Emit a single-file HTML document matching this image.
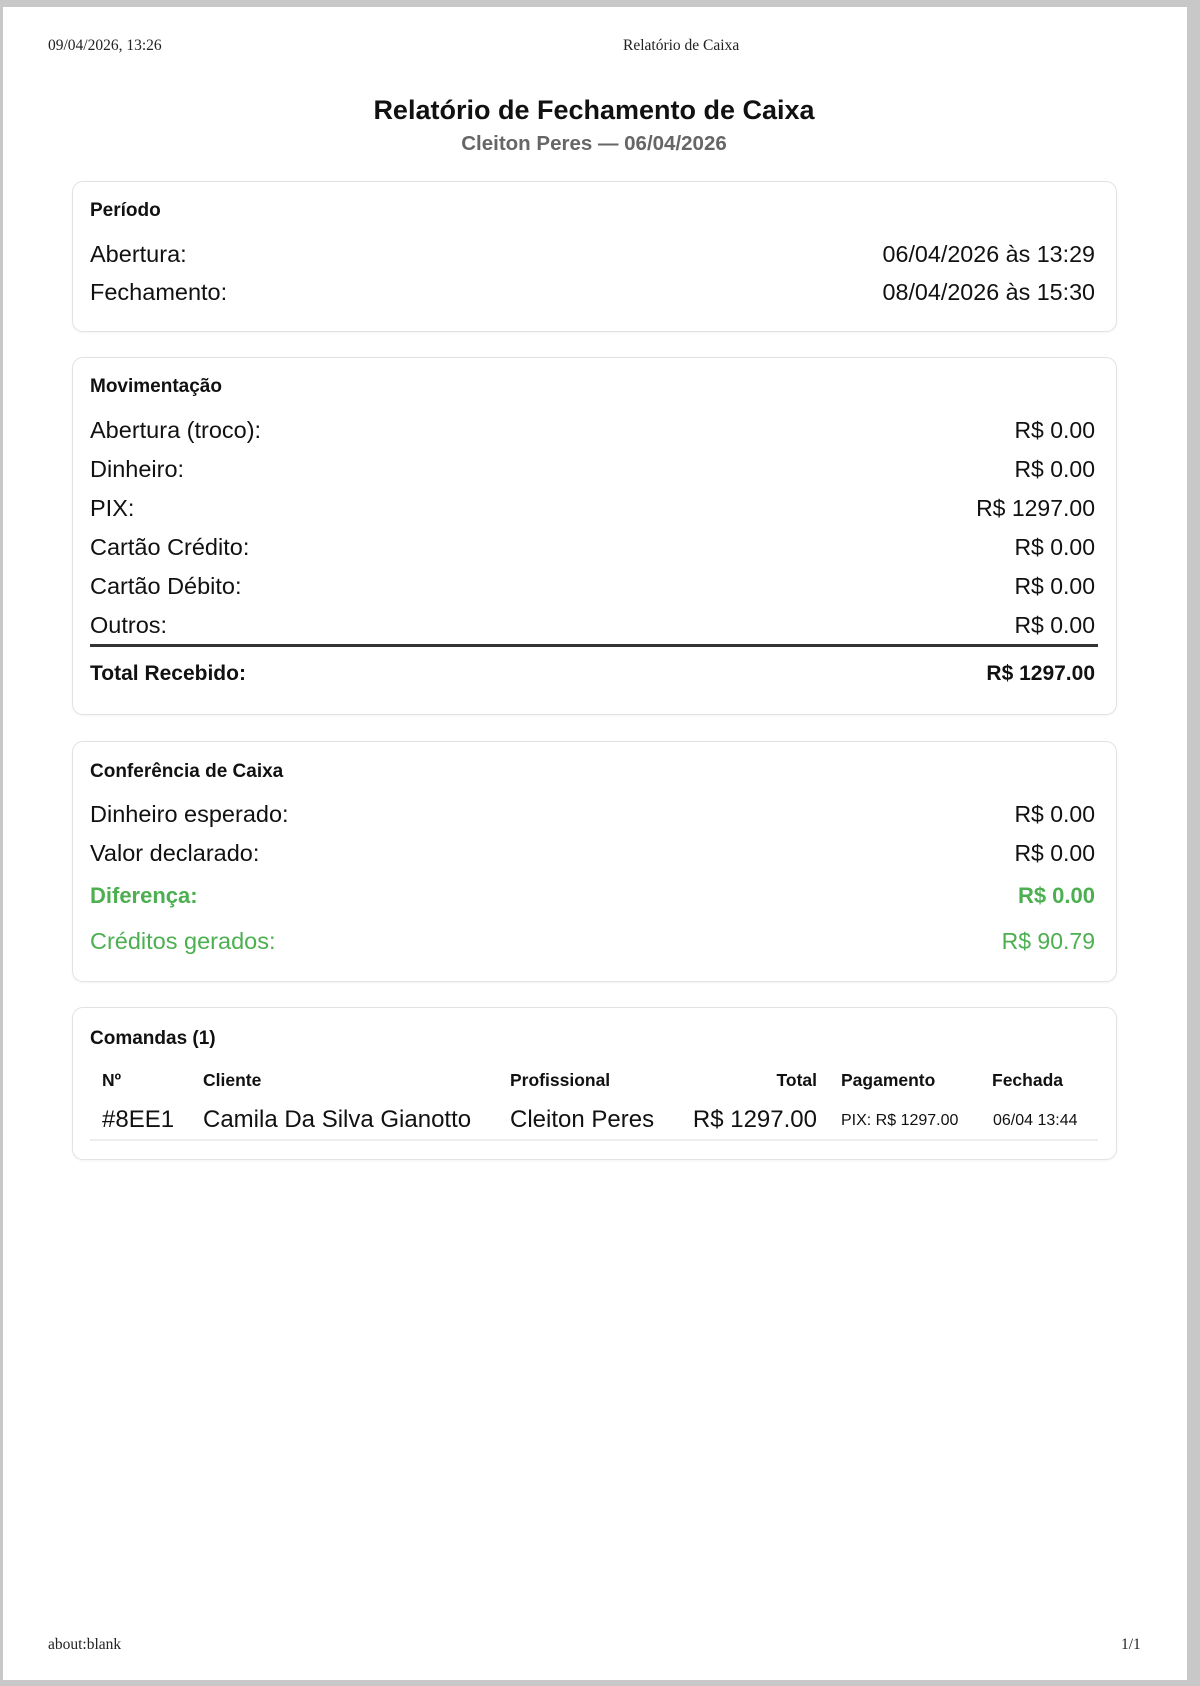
<!DOCTYPE html>
<html><head><meta charset="utf-8"><style>
*{margin:0;padding:0;box-sizing:border-box}
html,body{width:1200px;height:1686px;overflow:hidden}
body{background:#c8c8c8;position:relative;font-family:"Liberation Sans",Arial,sans-serif;color:#111}
.page{position:absolute;left:3px;top:7px;width:1184px;height:1673px;background:#fff}
.t{position:absolute;white-space:nowrap;line-height:28px}
.ser{font-family:"Liberation Serif",serif;font-size:15.5px;color:#222}
.card{position:absolute;left:72px;width:1045px;border:1.5px solid #e2e2e2;border-radius:11px;box-shadow:0 1px 2px rgba(0,0,0,.05)}
.h{font-weight:bold;font-size:19px;left:90px}
.l{left:90px;font-size:23.5px}
.r{right:105px;font-size:23px;text-align:right}
.g{color:#4caf50}
.s{font-size:16px}
.hb{font-weight:bold;font-size:17.5px}
</style></head><body>
<div class="page"></div>
<div class="t ser" style="left:48px;top:32px">09/04/2026, 13:26</div>
<div class="t ser" style="left:623px;top:32px">Relatório de Caixa</div>
<div class="t" style="left:0;width:1188px;text-align:center;top:96px;font-size:27px;font-weight:bold">Relatório de Fechamento de Caixa</div>
<div class="t" style="left:0;width:1188px;text-align:center;top:130px;font-size:20.5px;font-weight:bold;color:#666">Cleiton Peres — 06/04/2026</div>

<div class="card" style="top:181px;height:151px"></div>
<div class="t h" style="top:197px">Período</div>
<div class="t l" style="top:240px">Abertura:</div><div class="t r" style="top:240px;font-size:23.3px">06/04/2026 às 13:29</div>
<div class="t l" style="top:278px">Fechamento:</div><div class="t r" style="top:278px;font-size:23.3px">08/04/2026 às 15:30</div>

<div class="card" style="top:357px;height:358px"></div>
<div class="t h" style="top:373px">Movimentação</div>
<div class="t l" style="top:416px">Abertura (troco):</div><div class="t r" style="top:416px">R$ 0.00</div>
<div class="t l" style="top:455px">Dinheiro:</div><div class="t r" style="top:455px">R$ 0.00</div>
<div class="t l" style="top:494px">PIX:</div><div class="t r" style="top:494px">R$ 1297.00</div>
<div class="t l" style="top:533px">Cartão Crédito:</div><div class="t r" style="top:533px">R$ 0.00</div>
<div class="t l" style="top:572px">Cartão Débito:</div><div class="t r" style="top:572px">R$ 0.00</div>
<div class="t l" style="top:611px">Outros:</div><div class="t r" style="top:611px">R$ 0.00</div>
<div style="position:absolute;left:90px;top:644px;width:1008px;height:3px;background:#333"></div>
<div class="t l" style="top:660px;font-weight:bold;font-size:21px">Total Recebido:</div><div class="t r" style="top:660px;font-weight:bold;font-size:21px">R$ 1297.00</div>

<div class="card" style="top:741px;height:241px"></div>
<div class="t h" style="top:758px">Conferência de Caixa</div>
<div class="t l" style="top:800px">Dinheiro esperado:</div><div class="t r" style="top:800px">R$ 0.00</div>
<div class="t l" style="top:839px">Valor declarado:</div><div class="t r" style="top:839px">R$ 0.00</div>
<div class="t l g" style="top:882px;font-weight:bold;font-size:22px">Diferença:</div><div class="t r g" style="top:882px;font-weight:bold;font-size:22px">R$ 0.00</div>
<div class="t l g" style="top:927px">Créditos gerados:</div><div class="t r g" style="top:927px">R$ 90.79</div>

<div class="card" style="top:1007px;height:153px"></div>
<div class="t h" style="top:1025px">Comandas (1)</div>
<div class="t hb" style="left:102px;top:1066px">Nº</div>
<div class="t hb" style="left:203px;top:1066px">Cliente</div>
<div class="t hb" style="left:510px;top:1066px">Profissional</div>
<div class="t hb" style="right:383px;top:1066px">Total</div>
<div class="t hb" style="left:841px;top:1066px">Pagamento</div>
<div class="t hb" style="left:992px;top:1066px">Fechada</div>
<div class="t" style="left:102px;top:1106px;font-size:24px">#8EE1</div>
<div class="t" style="left:203px;top:1106px;font-size:24px">Camila Da Silva Gianotto</div>
<div class="t" style="left:510px;top:1106px;font-size:24px">Cleiton Peres</div>
<div class="t" style="right:383px;top:1106px;font-size:24px">R$ 1297.00</div>
<div class="t s" style="left:841px;top:1107px">PIX: R$ 1297.00</div>
<div class="t s" style="left:993px;top:1107px">06/04 13:44</div>
<div style="position:absolute;left:90px;top:1139px;width:1008px;height:2px;background:#eee"></div>

<div class="t ser" style="left:48px;top:1631px">about:blank</div>
<div class="t ser" style="left:1121px;top:1631px">1/1</div>
</body></html>
